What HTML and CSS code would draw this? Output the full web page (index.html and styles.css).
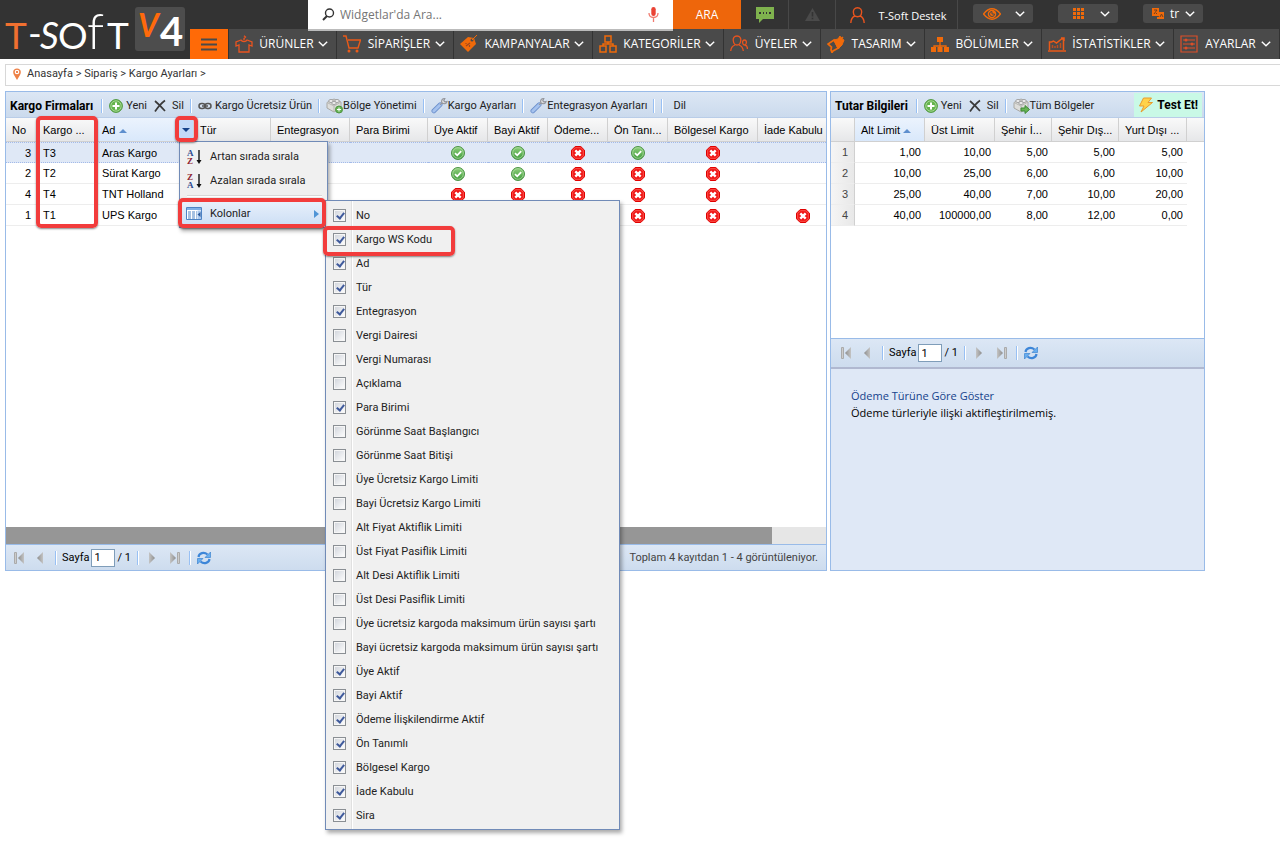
FILE: index.html
```html
<!DOCTYPE html>
<html lang="tr">
<head>
<meta charset="utf-8">
<meta name="viewport" content="width=device-width, initial-scale=1">
<title>Kargo Ayarları</title>
<link rel="stylesheet" href="styles.css">
</head>
<body>
<svg class="sprite" aria-hidden="true">
  <defs>
    <linearGradient id="gGreen" x1="0" y1="0" x2="0" y2="1"><stop offset="0" stop-color="#8fd07c"/><stop offset="1" stop-color="#3f9a3b"/></linearGradient>
    <linearGradient id="gGrey" x1="0" y1="0" x2="1" y2="0"><stop offset="0" stop-color="#8d8d8d"/><stop offset="1" stop-color="#c4c4c4"/></linearGradient>
  </defs>
  <symbol id="ok" viewBox="0 0 14 14"><circle cx="7" cy="7" r="6.500" fill="url(#gGreen)" stroke="#4c9448"/><circle cx="7" cy="7" r="5.300" fill="none" stroke="#b5e0a8" stroke-width=".7"/><path d="M4 7.200 6.200 9.300 10.200 5.200" fill="none" stroke="#fff" stroke-width="1.800"/></symbol>
  <symbol id="no" viewBox="0 0 14 14"><path d="M4.200.500h5.600l3.700 3.700v5.600l-3.700 3.700H4.200L.500 9.800V4.200z" fill="#f01616" stroke="#e00000"/><path d="M4.500 1.700h5l2.800 2.800v5l-2.800 2.800h-5L1.700 9.500v-5z" fill="none" stroke="#ff7a6c" stroke-width=".6"/><path d="m4.300 4.300 5.400 5.400m0-5.400L4.300 9.700" stroke="#fff" stroke-width="2.400"/></symbol>
  <symbol id="add" viewBox="0 0 14 14"><circle cx="7" cy="7" r="6.400" fill="#64b34d" stroke="#4f983f"/><circle cx="7" cy="7" r="5.200" fill="none" stroke="#b5dfa3" stroke-width=".8"/><path d="M7 3.500v7M3.500 7h7" stroke="#fff" stroke-width="2"/></symbol>
  <symbol id="del" viewBox="0 0 14 14"><path d="M2 2c3 2.500 6 5.500 10 10M12 1.500C8.500 4 5 8 2 12.500" fill="none" stroke="#3a3a3a" stroke-width="1.700"/></symbol>
  <symbol id="chain" viewBox="0 0 14 14"><g fill="none" stroke="#555" stroke-width="1.500"><rect x="1" y="4.500" width="6" height="5" rx="2.500"/><rect x="7" y="4.500" width="6" height="5" rx="2.500"/><path d="M4 7h6"/></g></symbol>
  <symbol id="brick" viewBox="0 0 17 17"><path d="M1 5.500 8 2l7 3v6l-7 4-7-4z" fill="#dededb" stroke="#a8a8a4"/><path d="m1 5.500 7 3.500v6m0-6 7-4" fill="none" stroke="#b8b8b4"/><ellipse cx="5" cy="4" rx="2.300" ry="1.500" fill="#f2f2f2" stroke="#a0a0a0"/><ellipse cx="11" cy="4" rx="2.300" ry="1.500" fill="#f2f2f2" stroke="#a0a0a0"/><ellipse cx="8" cy="6" rx="2.300" ry="1.500" fill="#f2f2f2" stroke="#a0a0a0"/></symbol>
  <symbol id="wrench" viewBox="0 0 17 17"><path d="m2.800 14 6.400-6.300" stroke="#6c90cc" stroke-width="4.600" stroke-linecap="round"/><path d="m2.800 14 6.400-6.300" stroke="#a5c2ee" stroke-width="3" stroke-linecap="round"/><path d="m9 7.800 2.200-2.200M13.800 1.500C11.500 1.300 10 3.300 10.800 5.800c2 1.700 4.500 1 5.200-1.300l-2.200.4-1-1.200z" fill="#e4e4e4" stroke="#94979e" stroke-width="1.200"/></symbol>
  <symbol id="bolt" viewBox="0 0 16 16"><path d="M5.500 1h8L10 5.500h4.500L3 15l3-6H1.500z" fill="#ffd24a" stroke="#e99b2c"/></symbol>
  <symbol id="prev" viewBox="0 0 6 12"><path d="M6 0v12L0 6z" fill="url(#gGrey)"/></symbol>
  <symbol id="first" viewBox="0 0 11 12"><path d="M.5.500h2v11h-2z" fill="#ccc" stroke="#aaa"/><path d="M10 0v12L4 6z" fill="url(#gGrey)"/></symbol>
  <symbol id="refresh" viewBox="0 0 14 14"><path d="M1.500 6C2 2 7 .5 10.500 3.500M12.500 8C12 12 7 13.500 3.500 10.500" fill="none" stroke="#3d86d8" stroke-width="2.200"/><path d="M13.500 1v5.500H8zM.5 13V7.500H6z" fill="#67aef0" stroke="#2f7acb" stroke-width=".6"/></symbol>
  <symbol id="chev" viewBox="0 0 10 6"><path d="m.8.800 4.200 4 4.200-4" fill="none" stroke="#fff" stroke-width="1.400"/></symbol>
  <symbol id="sortaz" viewBox="0 0 16 18"><path d="M13 2v12" stroke="#111" stroke-width="1.400"/><path d="M10.500 12h5L13 16z" fill="#111"/></symbol>
</svg>

<header class="top">
  <a class="logo" href="#" aria-label="T-Soft V4">
    <svg width="190" height="59" viewBox="0 0 190 59">
      <g font-family="Lato, sans-serif" font-size="37" fill="#fff">
        <text x="5" y="49" fill="#f07030">T</text>
        <text x="28" y="47">-</text>
        <text x="40" y="49" font-style="italic">S</text>
        <text x="58" y="49">O</text>
        <text x="87" y="49" font-size="50" font-weight="300">f</text>
        <text x="107" y="49">T</text>
      </g>
      <rect x="135" y="7" width="50" height="44" rx="3" fill="#4d4d4d"/>
      <g font-family="Lato, sans-serif" font-weight="700">
        <text x="138" y="37" font-size="32" fill="#ff6a0b" font-style="italic">V</text>
        <text x="160" y="46" font-size="40" fill="#fff">4</text>
      </g>
    </svg>
  </a>
  <div class="top-main">
    <div class="top-bar">
      <form class="search" role="search">
        <svg width="13" height="13" viewBox="0 0 13 13"><circle cx="7.500" cy="5" r="4" fill="none" stroke="#333" stroke-width="1.400"/><path d="M5 8 1 12" stroke="#333" stroke-width="2"/></svg>
        <input type="search" aria-label="Widgetlar'da Ara" placeholder="Widgetlar'da Ara...">
        <svg width="11" height="15" viewBox="0 0 11 15"><rect x="3.300" y="0" width="4.400" height="9" rx="2.200" fill="#ea4335"/><path d="M1 6c0 6 9 6 9 0M5.500 10.500V15" fill="none" stroke="#f07b70" stroke-width="1.300"/></svg>
      </form>
      <button class="ara">ARA</button>
      <button class="tb chat" aria-label="Mesajlar"><svg width="18" height="16" viewBox="0 0 18 16"><path d="M0 0h18v12H7l-4 4v-4H0z" fill="#7fb24e"/><path d="M3 6h2m2 0h1m2 0h1m2 0h2" stroke="#333" stroke-width="2"/></svg></button>
      <button class="tb warn" aria-label="Uyarılar"><svg width="15" height="13" viewBox="0 0 15 13"><path d="M7.500 0 15 13H0z" fill="#4a4a4a"/><path d="M7.500 4v4.500m0 1.200v1.600" stroke="#333" stroke-width="1.600"/></svg></button>
      <button class="tb user"><svg width="15" height="16" viewBox="0 0 15 16"><path d="M7.500.7c-6 0-5 9 0 9s6-9 0-9zM5 9C2 10 1 12 .8 16M10 9c3 1 4 3 4.200 7" fill="none" stroke="#e8541e" stroke-width="1.400"/></svg><span>T-Soft Destek</span></button>
      <div class="pills">
        <button class="pill" aria-label="Görünüm"><svg width="18" height="12" viewBox="0 0 18 12"><path d="M.5 6Q9-4.500 17.500 6 9 16.500.5 6z" fill="none" stroke="#f06a0a" stroke-width="1.500"/><circle cx="9" cy="6" r="4.300" fill="#f06a0a"/><path d="M9 3.500A2.500 2.500 0 1 0 11.500 6H9z" fill="none" stroke="#4a4a4a"/></svg><svg class="chev"><use href="#chev"/></svg></button>
        <button class="pill" aria-label="Uygulamalar"><svg width="11" height="11" viewBox="0 0 11 11"><path d="M1.500 0v11M5.500 0v11M9.500 0v11" stroke="#f06a0a" stroke-width="3"/><path d="M0 3.500h11M0 7.500h11" stroke="#4a4a4a"/></svg><svg class="chev"><use href="#chev"/></svg></button>
        <button class="pill lang"><svg width="12" height="11" viewBox="0 0 12 11"><path d="M0 0h7v8H0zM6 4h6v7H5V9h2z" fill="#f06a0a"/><path d="M2 2h3L2 6m2-1 1 1M8 9l1.500-3L11 9" fill="none" stroke="#704020"/></svg><span>tr</span><svg class="chev"><use href="#chev"/></svg></button>
      </div>
    </div>
    <nav class="nav">
      <button class="burger" aria-label="Menü"><svg width="16" height="13" viewBox="0 0 16 13"><path d="M0 1.500h16M0 6.500h16M0 11.500h16" stroke="#4a4a4a" stroke-width="2.200"/></svg></button>
      <a class="n1" href="#"><svg class="ni" viewBox="0 0 18 18"><path d="M6 5 1 7v4l3-1v7h10v-7l3 1V7l-5-2c-1 2-5 2-6 0zM9 5V3.500L10.500 2 9 .7" fill="none" stroke="#ea5420" stroke-width="1.300"/></svg><span>ÜRÜNLER</span><svg class="chev"><use href="#chev"/></svg></a>
      <a class="n2" href="#"><svg class="ni" viewBox="0 0 18 18"><path d="M0 1h3l3 12h9l2.500-8H5" fill="none" stroke="#ea5a18" stroke-width="1.400"/><circle cx="6" cy="16" r="1.500" fill="#ea5a18"/><circle cx="14" cy="16" r="1.500" fill="#ea5a18"/></svg><span>SİPARİŞLER</span><svg class="chev"><use href="#chev"/></svg></a>
      <a class="n3" href="#"><svg class="ni" viewBox="0 0 18 18"><path d="m0 9 8-7 6 1 2 6-8 8z" fill="#f06a0a"/><circle cx="12" cy="5" r="1.500" fill="#4a4a4a"/><path d="M12 5 17 0" stroke="#f06a0a"/><path d="m6 11 4-3M6 8v1m3.500 1v2" stroke="#9d4820" stroke-width="1.200"/></svg><span>KAMPANYALAR</span><svg class="chev"><use href="#chev"/></svg></a>
      <a class="n4" href="#"><svg class="ni" viewBox="0 0 18 18"><path d="M6 1h6v6H6zM1 11h6v6H1zM11 11h6v6h-6zM4 11V9h10v2M9 7v2" fill="none" stroke="#f06a0a" stroke-width="1.500"/></svg><span>KATEGORİLER</span><svg class="chev"><use href="#chev"/></svg></a>
      <a class="n5" href="#"><svg class="ni" viewBox="0 0 18 18"><path d="M7 1C1 1 3 10 7 10s6-9 0-9zM5 10c-3 1-4 3-4.300 6M9 10c3 1 4 3 4.300 6M14.500 5c-3 0-2 5 0 5s3-5 0-5zM15 10c2 .5 2.500 2 2.500 4" fill="none" stroke="#e8541e" stroke-width="1.300"/></svg><span>ÜYELER</span><svg class="chev"><use href="#chev"/></svg></a>
      <a class="n6" href="#"><svg class="ni" viewBox="0 0 18 18"><path d="m7 5 4-1 2-3 1 2 2-1-1 2 2 1-2 5-4 4z" fill="#f06a0a" stroke="#f06a0a"/><path d="m7 5 4.500 8L6 16l-1 1.500L4 15l.5-3L1 9z" fill="none" stroke="#f06a0a" stroke-width="1.700"/></svg><span>TASARIM</span><svg class="chev"><use href="#chev"/></svg></a>
      <a class="n7" href="#"><svg class="ni" viewBox="0 0 18 18"><path d="M6 2h6v5H6zM0 12h5v5H0zM6.500 12h5v5h-5zM13 12h5v5h-5z" fill="#f06a0a"/><path d="M9 6v7M3 13v-2h12v2" fill="none" stroke="#f06a0a" stroke-width="1.300"/></svg><span>BÖLÜMLER</span><svg class="chev"><use href="#chev"/></svg></a>
      <a class="n8" href="#"><svg class="ni" viewBox="0 0 18 18"><path d="M1.500 15V7h2l2-1 3 2 5-4h2v11M13 3h3v3M0 16h18" fill="none" stroke="#ea5a18" stroke-width="1.500"/><path d="M4.500 13v-3m2.500 3v-2m2.500 2v-3m3 3V8" stroke="#b84e20" stroke-width="1.500"/></svg><span>İSTATİSTİKLER</span><svg class="chev"><use href="#chev"/></svg></a>
      <a class="n9" href="#"><svg class="ni" viewBox="0 0 18 18"><path d="M1 1h16v16H1zM3 5h12M3 9h12M3 13h12" fill="none" stroke="#dd4f28" stroke-width="1.200"/><circle cx="6" cy="5" r="1.500" fill="#dd4f28"/><circle cx="12" cy="9" r="1.500" fill="#dd4f28"/><circle cx="6" cy="13" r="1.500" fill="#dd4f28"/></svg><span>AYARLAR</span><svg class="chev"><use href="#chev"/></svg></a>
    </nav>
  </div>
</header>

<nav class="crumbs"><svg width="8" height="12" viewBox="0 0 8 12"><path d="M4 12 1 7C-1 3 1 .5 4 .5S9 3 7 7z" fill="#ee8146"/><circle cx="4" cy="4" r="2.300" fill="#fff"/><circle cx="4" cy="4" r="1.100" fill="#ee6a2a"/></svg><span><a href="#">Anasayfa</a> &gt; <a href="#">Sipariş</a> &gt; <a href="#">Kargo Ayarları</a> &gt;</span></nav>

<main class="panels">
  <section class="panel">
    <div class="toolbar">
      <h2>Kargo Firmaları</h2><i class="sep"></i>
      <button><svg class="i14"><use href="#add"/></svg>Yeni</button>
      <button class="sil"><svg class="i14"><use href="#del"/></svg>Sil</button><i class="sep"></i>
      <button><svg class="i14"><use href="#chain"/></svg>Kargo Ücretsiz Ürün</button><i class="sep"></i>
      <button class="big"><svg class="i17" viewBox="0 0 17 17"><use href="#brick"/><circle cx="13" cy="12.500" r="3.500" fill="#67b455" stroke="#4d9440"/><path d="M13 10.500v4m-2-2h4" stroke="#fff"/></svg>Bölge Yönetimi</button><i class="sep"></i>
      <button class="big"><svg class="i17"><use href="#wrench"/></svg>Kargo Ayarları</button><i class="sep"></i>
      <button class="big"><svg class="i17"><use href="#wrench"/></svg>Entegrasyon Ayarları</button><i class="sep"></i><i class="sep"></i>
      <button class="dil">Dil</button>
    </div>
    <div class="grid-body">
      <table class="grid firms">
        <colgroup><col class="w31"><col class="w59"><col class="w98"><col class="w77"><col class="w79"><col class="w78"><col class="w60"><col class="w60"><col class="w60"><col class="w60"><col class="w90"><col class="w90"></colgroup>
        <thead><tr><th>No</th><th>Kargo ...</th><th class="sorted">Ad <i class="asc"></i><button class="drop" aria-label="Kolon menüsü"></button></th><th>Tür</th><th>Entegrasyon</th><th>Para Birimi</th><th>Üye Aktif</th><th>Bayi Aktif</th><th>Ödeme...</th><th>Ön Tanı...</th><th>Bölgesel Kargo</th><th>İade Kabulu</th></tr></thead>
        <tbody>
          <tr class="sel"><td class="r">3</td><td>T3</td><td>Aras Kargo</td><td></td><td></td><td></td><td class="c"><svg><use href="#ok"/></svg></td><td class="c"><svg><use href="#ok"/></svg></td><td class="c"><svg><use href="#no"/></svg></td><td class="c"><svg><use href="#ok"/></svg></td><td class="c"><svg><use href="#no"/></svg></td><td></td></tr>
          <tr><td class="r">2</td><td>T2</td><td>Sürat Kargo</td><td></td><td></td><td></td><td class="c"><svg><use href="#ok"/></svg></td><td class="c"><svg><use href="#ok"/></svg></td><td class="c"><svg><use href="#no"/></svg></td><td class="c"><svg><use href="#no"/></svg></td><td class="c"><svg><use href="#no"/></svg></td><td></td></tr>
          <tr><td class="r">4</td><td>T4</td><td>TNT Holland</td><td></td><td></td><td></td><td class="c"><svg><use href="#no"/></svg></td><td class="c"><svg><use href="#no"/></svg></td><td class="c"><svg><use href="#no"/></svg></td><td class="c"><svg><use href="#no"/></svg></td><td class="c"><svg><use href="#no"/></svg></td><td></td></tr>
          <tr><td class="r">1</td><td>T1</td><td>UPS Kargo</td><td></td><td></td><td></td><td></td><td></td><td></td><td class="c"><svg><use href="#no"/></svg></td><td class="c"><svg><use href="#no"/></svg></td><td class="c"><svg><use href="#no"/></svg></td></tr>
        </tbody>
      </table>
    </div>
    <div class="hscroll"><div class="thumb"></div></div>
    <div class="pager">
      <button class="p-first" aria-label="İlk"><svg width="11" height="12"><use href="#first"/></svg></button>
      <button class="p-prev" aria-label="Önceki"><svg width="6" height="12"><use href="#prev"/></svg></button><i class="sep"></i>
      <label for="pg1">Sayfa</label><input id="pg1" type="text" value="1"><span>/ 1</span><i class="sep"></i>
      <button class="p-prev flip" aria-label="Sonraki"><svg width="6" height="12"><use href="#prev"/></svg></button>
      <button class="p-first flip" aria-label="Son"><svg width="11" height="12"><use href="#first"/></svg></button><i class="sep"></i>
      <button class="p-ref" aria-label="Yenile"><svg width="14" height="14"><use href="#refresh"/></svg></button>
      <span class="total">Toplam 4 kayıtdan 1 - 4 görüntüleniyor.</span>
    </div>
  </section>

  <section class="panel">
    <div class="toolbar">
      <h2>Tutar Bilgileri</h2><i class="sep"></i>
      <button><svg class="i14"><use href="#add"/></svg>Yeni</button>
      <button class="sil"><svg class="i14"><use href="#del"/></svg>Sil</button><i class="sep"></i>
      <button class="big"><svg class="i17" viewBox="0 0 17 17"><use href="#brick"/><path d="M8 11h4V8.500l4.500 4-4.500 4V14H8z" fill="#67b455" stroke="#3f8a36"/></svg>Tüm Bölgeler</button>
      <button class="test"><svg width="16" height="16"><use href="#bolt"/></svg>Test Et!</button>
    </div>
    <div class="grid-body">
      <table class="grid limits">
        <colgroup><col class="w24"><col class="w70"><col class="w70"><col class="w57"><col class="w67"><col class="w68"><col></colgroup>
        <thead><tr><th></th><th class="sorted">Alt Limit <i class="asc"></i></th><th>Üst Limit</th><th>Şehir İ...</th><th>Şehir Dış...</th><th>Yurt Dışı ...</th><th class="last"></th></tr></thead>
        <tbody>
          <tr><td class="num">1</td><td>1,00</td><td>10,00</td><td>5,00</td><td>5,00</td><td>5,00</td><td class="fill"></td></tr>
          <tr><td class="num">2</td><td>10,00</td><td>25,00</td><td>6,00</td><td>6,00</td><td>10,00</td><td class="fill"></td></tr>
          <tr><td class="num">3</td><td>25,00</td><td>40,00</td><td>7,00</td><td>10,00</td><td>20,00</td><td class="fill"></td></tr>
          <tr><td class="num">4</td><td>40,00</td><td>100000,00</td><td>8,00</td><td>12,00</td><td>0,00</td><td class="fill"></td></tr>
        </tbody>
      </table>
    </div>
    <div class="pager tall">
      <button class="p-first" aria-label="İlk"><svg width="11" height="12"><use href="#first"/></svg></button>
      <button class="p-prev" aria-label="Önceki"><svg width="6" height="12"><use href="#prev"/></svg></button><i class="sep"></i>
      <label for="pg2">Sayfa</label><input id="pg2" type="text" value="1"><span>/ 1</span><i class="sep"></i>
      <button class="p-prev flip" aria-label="Sonraki"><svg width="6" height="12"><use href="#prev"/></svg></button>
      <button class="p-first flip" aria-label="Son"><svg width="11" height="12"><use href="#first"/></svg></button><i class="sep"></i>
      <button class="p-ref" aria-label="Yenile"><svg width="14" height="14"><use href="#refresh"/></svg></button>
    </div>
    <div class="info"><h3>Ödeme Türüne Göre Göster</h3><p>Ödeme türleriyle ilişki aktifleştirilmemiş.</p></div>
  </section>
</main>

<div class="menu sort-menu">
  <button><svg width="16" height="18"><use href="#sortaz"/><text x="1" y="8" class="az blue">A</text><text x="1" y="16" class="az red">Z</text></svg>Artan sırada sırala</button>
  <button><svg width="16" height="18"><use href="#sortaz"/><text x="1" y="8" class="az red">Z</text><text x="1" y="16" class="az blue">A</text></svg>Azalan sırada sırala</button>
  <hr>
  <button class="open"><svg width="16" height="14" viewBox="0 0 16 14"><path d="M.5.500h15v12H.5z" fill="#fff" stroke="#4d83c4"/><path d="M1 1h14v2H1z" fill="#7fb0e6"/><path d="M2 5h3m1 0h3m1 0h1M2 7h3m1 0h3m1 0h1M2 9h3m1 0h3m1 0h1M2 11h3m1 0h3m1 0h1" stroke="#4d83c4"/><path d="M11.500 3.500h3.500v8.500h-3.500z" fill="#a9c8ee"/><path d="m14.500 5-3 2.500 3 2.500z" fill="#2b5797"/></svg>Kolonlar<i class="sub"></i></button>
</div>

<div class="menu col-menu">
  <label><input type="checkbox" checked>No</label>
  <label><input type="checkbox" checked>Kargo WS Kodu</label>
  <label><input type="checkbox" checked>Ad</label>
  <label><input type="checkbox" checked>Tür</label>
  <label><input type="checkbox" checked>Entegrasyon</label>
  <label><input type="checkbox">Vergi Dairesi</label>
  <label><input type="checkbox">Vergi Numarası</label>
  <label><input type="checkbox">Açıklama</label>
  <label><input type="checkbox" checked>Para Birimi</label>
  <label><input type="checkbox">Görünme Saat Başlangıcı</label>
  <label><input type="checkbox">Görünme Saat Bitişi</label>
  <label><input type="checkbox">Üye Ücretsiz Kargo Limiti</label>
  <label><input type="checkbox">Bayi Ücretsiz Kargo Limiti</label>
  <label><input type="checkbox">Alt Fiyat Aktiflik Limiti</label>
  <label><input type="checkbox">Üst Fiyat Pasiflik Limiti</label>
  <label><input type="checkbox">Alt Desi Aktiflik Limiti</label>
  <label><input type="checkbox">Üst Desi Pasiflik Limiti</label>
  <label><input type="checkbox">Üye ücretsiz kargoda maksimum ürün sayısı şartı</label>
  <label><input type="checkbox">Bayi ücretsiz kargoda maksimum ürün sayısı şartı</label>
  <label><input type="checkbox" checked>Üye Aktif</label>
  <label><input type="checkbox" checked>Bayi Aktif</label>
  <label><input type="checkbox" checked>Ödeme İlişkilendirme Aktif</label>
  <label><input type="checkbox" checked>Ön Tanımlı</label>
  <label><input type="checkbox" checked>Bölgesel Kargo</label>
  <label><input type="checkbox" checked>İade Kabulu</label>
  <label><input type="checkbox" checked>Sira</label>
</div>

<div class="mark mark-codes"></div>
<div class="mark mark-arrow"></div>
<div class="mark mark-columns"></div>
<div class="mark mark-ws"></div>
</body>
</html>
```
FILE: styles.css
```css
* { box-sizing: border-box; }
body { margin: 0; position: relative; min-height: 100vh; background: #fff; color: #000; font: 11px/14px Roboto, sans-serif; }
button { font: inherit; color: inherit; background: none; border: 0; padding: 0; margin: 0; display: flex; align-items: center; white-space: nowrap; }
a { color: inherit; text-decoration: none; }
svg { flex: none; display: block; }
h2, h3, p { margin: 0; }
.sprite { position: absolute; width: 0; height: 0; }

/* Top header */
.top { display: flex; height: 59px; background: #333; color: #fff; font: 12px/16px "Open Sans", sans-serif; }
.logo { width: 190px; flex: none; }
.top-main { flex: 1; min-width: 0; }
.top-bar { display: flex; height: 29px; padding-left: 118px; }
.search { position: relative; z-index: 1; width: 365px; height: 31px; display: flex; align-items: center; padding: 0 14px; background: #fff; border-bottom: 2px solid #bbb; margin: 0; }
.search input { flex: 1; min-width: 0; border: 0; padding: 0 0 0 5px; outline: 0; background: none; font: inherit; }
.search input::placeholder { color: #757575; }
.ara { width: 68px; background: #ee660b; justify-content: center; }
.tb { justify-content: center; border-right: 1px solid #484848; }
.chat { width: 48px; }
.warn { width: 47px; }
.user { width: 122px; gap: 13px; padding-left: 4px; font-size: 11px; }
.user span { padding-top: 3px; }
.pills { display: flex; gap: 25px; padding: 4px 0 6px 15px; }
.pill { width: 60px; height: 19px; background: #4a4a4a; border-radius: 3px; justify-content: space-between; padding: 0 8px 0 10px; }
.pill:nth-child(2) { padding-left: 15px; }
.lang { padding-left: 9px; }
.chev { width: 10px; height: 6px; }
.nav { display: flex; height: 30px; background: #4a4a4a; }
.nav a { display: flex; align-items: center; justify-content: space-between; padding: 0 8px 0 6px; border-right: 1px solid #333; white-space: nowrap; }
.nav span { padding-left: 2px; }
.nav .ni { width: 18px; height: 18px; }
.burger { width: 39px; background: #ff6a07; justify-content: center; border-right: 1px solid #333; }
.n1 { width: 108px; } .n2 { width: 117px; } .n3 { width: 139px; } .n4 { width: 131px; } .n5 { width: 97px; }
.n6 { width: 104px; } .n7 { width: 117px; } .n8 { width: 132px; } .n9 { width: 106px; }

.crumbs { margin: 5px 0 5px 5px; height: 22px; border: 1px solid #d8d8d8; border-right: 0; display: flex; align-items: center; gap: 6px; padding: 0 7px 3px; color: #333; }

/* Panels */
.panels { display: grid; grid-template-columns: 822fr 375fr; gap: 3px; padding: 0 75px 0 5px; }
.panel { min-width: 0; height: 480px; display: flex; flex-direction: column; border: 1px solid #99bbe8; background: #fff; }
.toolbar { height: 26px; flex: none; display: flex; align-items: center; gap: 6px; padding: 2px 4px 0; background: linear-gradient(#dce7f4, #cbdaed); color: #222; border-bottom: 1px solid #b9cde8; overflow: hidden; }
.toolbar h2 { margin-right: 2px; font-size: 12px; font-weight: 700; color: #000; white-space: nowrap; }
.toolbar button { gap: 3px; }
.toolbar .sil { gap: 5px; }
.toolbar .big { gap: 0; }
.toolbar .dil { padding-left: 4px; }
.sep { width: 2px; height: 14px; flex: none; background: #98c0f4; border-right: 1px solid #fff; }
.i14 { width: 14px; height: 14px; }
.i17 { width: 17px; height: 17px; }
.toolbar .test { margin: -2px -2px 0 auto; height: 24px; padding: 0 4px; background: #c9f9e6; font-weight: 700; font-size: 12px; color: #000; }
.grid-body { flex: 1; overflow: hidden; }
.grid { border-collapse: separate; border-spacing: 0; table-layout: fixed; font: 11px/14px "Liberation Sans", sans-serif; }
.firms { width: 842px; }
.limits { width: 100%; }
.w24 { width: 24px; } .w31 { width: 31px; } .w57 { width: 57px; } .w59 { width: 59px; } .w60 { width: 60px; } .w67 { width: 67px; } .w68 { width: 68px; }
.w70 { width: 70px; } .w77 { width: 77px; } .w78 { width: 78px; } .w79 { width: 79px; } .w90 { width: 90px; } .w98 { width: 98px; }
.grid th { position: relative; height: 24px; padding: 0 0 0 6px; text-align: left; font-weight: 400; white-space: nowrap; background: linear-gradient(#f9f9f9, #e6e7e9); border-right: 1px solid #d0d0d0; border-bottom: 1px solid #d0d0d0; }
.grid th.last { border-right: 0; }
.grid th.sorted { background: linear-gradient(#ebf3fd, #d9e8fb); }
.grid td { height: 21px; padding: 0 6px; border-bottom: 1px solid #ededed; white-space: nowrap; }
.firms .r { text-align: right; }
.firms .c { text-align: center; padding: 1px 0 0; }
.firms .c svg { width: 14px; height: 14px; margin: 0 auto; }
.firms .sel td { background: #dfe8f6; border-top: 1px dotted #a3bae9; border-bottom: 1px dotted #a3bae9; }
.limits td { text-align: right; padding-right: 4px; }
.limits .num { padding-right: 6px; color: #444; background: linear-gradient(90deg, #f5f5f5, #e8e8e8); border-right: 1px solid #d0d0d0; }
.limits .fill { border-bottom: 0; }
.asc { display: inline-block; border: 4px solid transparent; border-top: 0; border-bottom: 4px solid #5e8fce; vertical-align: 1px; }
.drop { position: absolute; top: 0; right: 0; width: 14px; height: 23px; background: #c3daf9; }
.drop::after { content: ""; margin: auto; border: 4px solid transparent; border-bottom: 0; border-top: 4px solid #15428b; }
.hscroll { height: 17px; flex: none; background: #e6e6e6; }
.thumb { width: 93.4%; height: 100%; background: #969696; }
.pager { height: 26px; flex: none; display: flex; align-items: center; padding: 0 8px; border-top: 1px solid #99bbe8; background: linear-gradient(#dce7f5, #cddcee); }
.pager.tall { height: 31px; border-bottom: 2px solid #b0b8d0; padding-left: 10px; }
.pager input { width: 24px; height: 18px; margin: 0 3px 0 0; padding: 0 3px; border: 1px solid #7f9db9; background: #fff; font: inherit; }
.pager .p-prev { margin: 0 12px; }
.pager label { margin: 0 1px 0 5px; }
.pager span + .sep { margin-left: 6px; }
.pager .flip svg { transform: scaleX(-1); }
.pager .p-prev.flip { margin: 0 14px 0 10px; }
.pager .p-first.flip { margin: 0 9px 0 0; }
.p-ref { margin-left: 6px; }
.total { margin-left: auto; color: #444; }
.info { height: 201px; flex: none; background: #dfe8f6; padding: 18px 20px; font: 11px/17px "Open Sans", sans-serif; }
.info h3 { font-size: 11px; font-weight: 400; color: #15428b; }

/* Menus */
.menu { position: absolute; background: #f0f0f0; border: 1px solid #718bb7; box-shadow: 2px 3px 4px #0005; color: #222; padding: 2px; }
.sort-menu { left: 179px; top: 141px; width: 149px; }
.sort-menu button { width: 100%; height: 24px; gap: 8px; padding: 1px 6px 0 4px; }
.sort-menu hr { margin: 3px 3px 4px 5px; border: 0; border-top: 1px solid #d8d8d8; border-bottom: 1px solid #fff; }
.sort-menu .open { background: linear-gradient(#e8f0fb, #cddff5); }
.sub { margin-left: auto; border: 4px solid transparent; border-right: 0; border-left: 5px solid #4f94d6; }
.az { font: bold 9px "Liberation Serif", serif; }
.blue { fill: #2c4a8f; }
.red { fill: #8f2430; }
.col-menu { left: 325px; top: 200px; width: 295px; background: linear-gradient(90deg, #f0f0f0 25px, #e0e0e0 25px, #e0e0e0 26px, #fff 26px, #fff 27px, #f0f0f0 27px); }
.col-menu label { display: flex; align-items: center; height: 24px; gap: 10px; padding: 1px 0 0 5px; white-space: nowrap; }
.col-menu input { appearance: none; flex: none; width: 13px; height: 13px; margin: 0; border: 1px solid #8a8f94; background: linear-gradient(135deg, #cfd3da, #fff); box-shadow: inset 0 0 0 1px #f6f6f6; position: relative; }
.col-menu input:checked::after { content: ""; position: absolute; left: 4px; top: 1px; width: 3px; height: 6px; border: solid #3f5a9c; border-width: 0 2px 2px 0; transform: rotate(38deg); box-sizing: content-box; }

/* Highlight frames */
.mark { position: absolute; border: 4px solid #f23c3c; border-radius: 5px; box-shadow: 0 1px 2px #0007; pointer-events: none; }
.mark-codes { left: 36px; top: 116px; width: 62px; height: 112px; }
.mark-arrow { left: 175px; top: 116px; width: 23px; height: 26px; }
.mark-columns { left: 178px; top: 198px; width: 148px; height: 30px; }
.mark-ws { left: 323px; top: 226px; width: 132px; height: 30px; }
```
